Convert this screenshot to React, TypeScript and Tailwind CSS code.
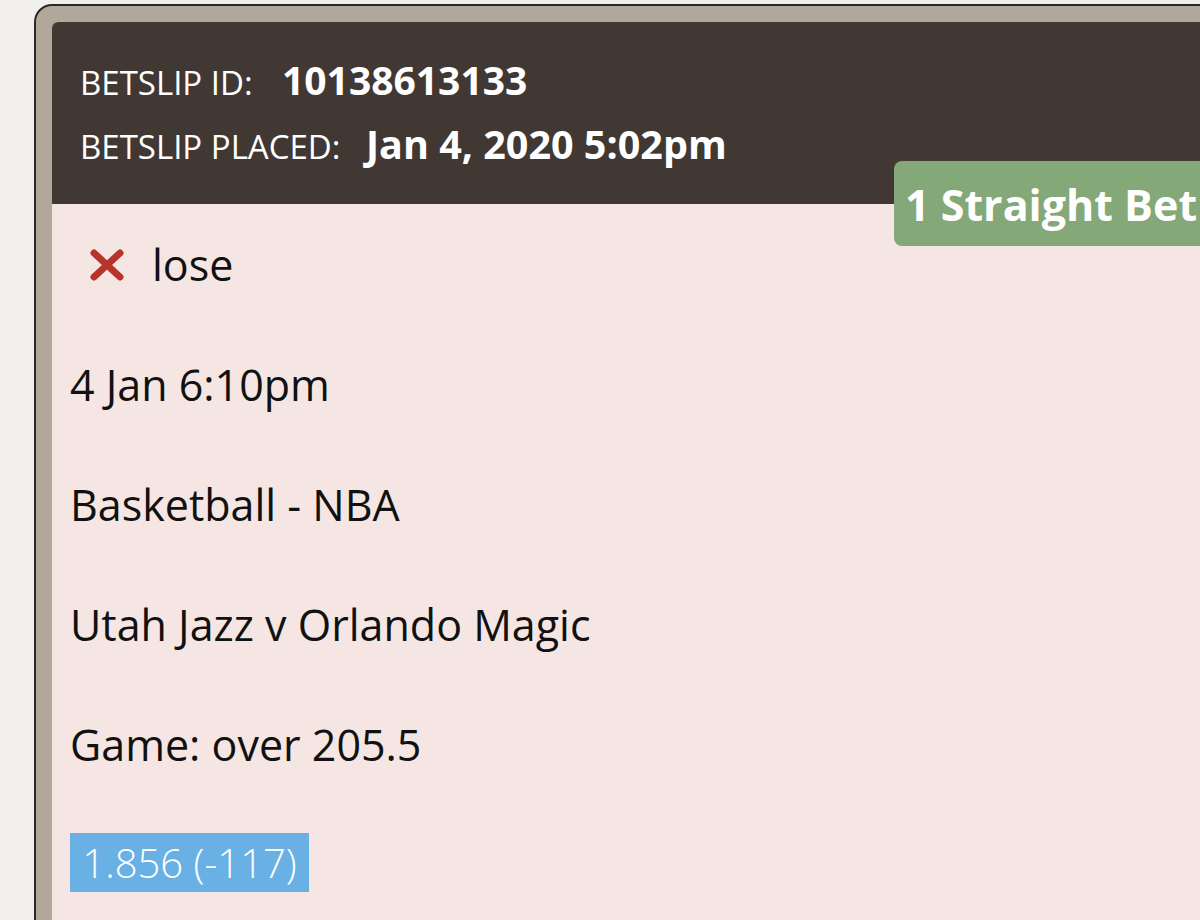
import React from 'react';

const rows = ['4 Jan 6:10pm', 'Basketball - NBA', 'Utah Jazz v Orlando Magic', 'Game: over 205.5'];

const App: React.FC = () => {
  return (
    <div className="w-[1200px] h-[920px] overflow-hidden bg-[#f1f0ec] pt-[4px] pl-[34px]" style={{ fontFamily: '"Open Sans", sans-serif' }}>
      <div className="w-[1200px] h-[960px] border-2 border-[#2c2825] rounded-tl-[18px] bg-[#b2a79b] pt-[16px] pl-[16px]">
        <div className="relative h-full rounded-tl-[6px] overflow-hidden bg-[#f5e6e3]">
          {/* header */}
          <div className="h-[182px] bg-[#413833] pl-[28px] pt-[34px] text-white">
            <div className="flex items-baseline h-[52px]">
              <span className="text-[33px] leading-[48px] w-[202px]">BETSLIP ID:</span>
              <span className="text-[39px] leading-[48px] font-bold">10138613133</span>
            </div>
            <div className="flex items-baseline h-[52px] mt-[12px]">
              <span className="text-[33px] leading-[48px] w-[286px]">BETSLIP PLACED:</span>
              <span className="text-[39.5px] leading-[48px] font-bold">Jan 4, 2020 5:02pm</span>
            </div>
          </div>

          <div className="absolute top-[139px] left-[842px] h-[85px] w-[400px] rounded-[8px] bg-[#84a877] pl-[11px] pt-[18px] text-white text-[43px] font-bold leading-[52px]">
            1 Straight Bet
          </div>

          {/* body */}
          <div className="pl-[18px] pt-[37px] text-[#111] text-[43px] leading-[48px]">
            <div className="flex items-center h-[48px]">
              <svg width="38" height="34" viewBox="0 0 38 34" className="ml-[18px] mr-[26px]">
                <path d="M6 5 L32 29 M32 5 L6 29" stroke="#b7342a" strokeWidth="7" strokeLinecap="round" />
              </svg>
              <span>lose</span>
            </div>
            {rows.map((r) => (
              <div key={r} className="h-[48px] mt-[72px]">{r}</div>
            ))}
            <div className="mt-[64px] inline-flex h-[59px] w-[239px] items-center justify-center bg-[#69b0e4] text-white font-light text-[40px]">
              1.856 (-117)
            </div>
          </div>
        </div>
      </div>
    </div>
  );
};

export default App;
